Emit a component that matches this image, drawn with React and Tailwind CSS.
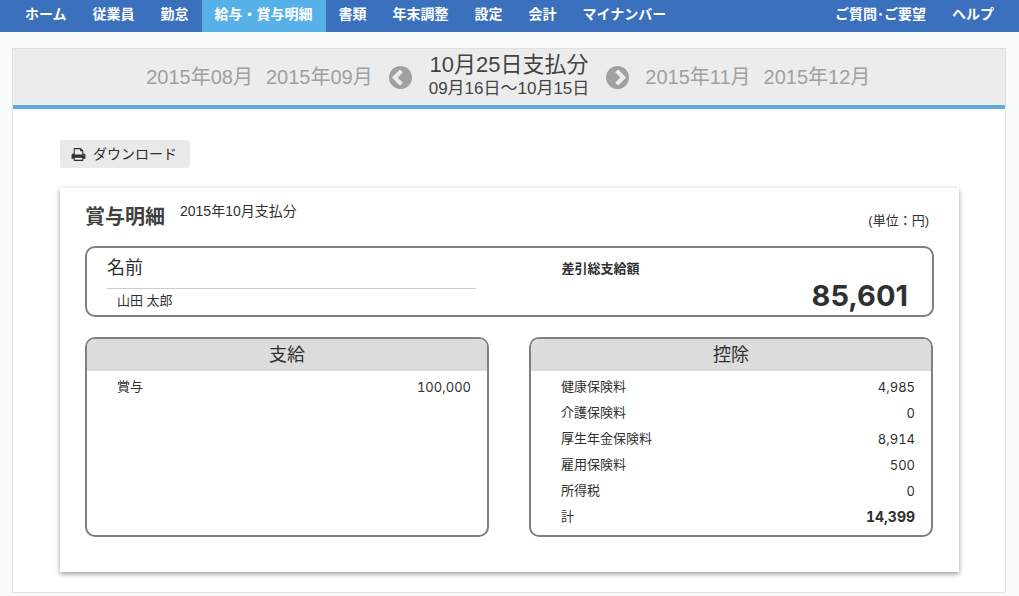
const NAV_ITEMS = ["ホーム", "従業員", "勤怠", "給与・賞与明細", "書類", "年末調整", "設定", "会計", "マイナンバー"];
const CURRENT_NAV = "給与・賞与明細";
const NAV_SUPPORT = ["ご質問･ご要望", "ヘルプ"];

const PAYMENTS = [{ label: "賞与", amount: "100,000" }];
const DEDUCTIONS = [
  { label: "健康保険料", amount: "4,985" },
  { label: "介護保険料", amount: "0" },
  { label: "厚生年金保険料", amount: "8,914" },
  { label: "雇用保険料", amount: "500" },
  { label: "所得税", amount: "0" },
  { label: "計", amount: "14,399", total: true },
];

function NavLink({ label, active }) {
  return (
    <li>
      <a
        href="#"
        aria-current={active ? "page" : undefined}
        className={`block px-[13px] pb-1 leading-7 whitespace-nowrap ${active ? "bg-[#58b0e8]" : ""}`}
      >
        {label}
      </a>
    </li>
  );
}

function ChevronCircle({ flipped }) {
  return (
    <svg
      viewBox="128 128 1536 1536"
      className={`size-[23px] ${flipped ? "-scale-x-100" : ""}`}
      fill="currentColor"
      aria-hidden="true"
    >
      <path d="M909 1395l102-102q19-19 19-45t-19-45l-307-307 307-307q19-19 19-45t-19-45l-102-102q-19-19-45-19t-45 19l-454 454q-19 19-19 45t19 45l454 454q19 19 45 19t45-19zm755-499q0 209-103 385.5t-279.5 279.5-385.5 103-385.5-103-279.5-279.5-103-385.5 103-385.5 279.5-279.5 385.5-103 385.5 103 279.5 279.5 103 385.5z" />
    </svg>
  );
}

function PrintIcon() {
  return (
    <svg viewBox="0 0 1792 1792" className="size-[15px]" fill="currentColor" aria-hidden="true">
      <path d="M448 1536h896v-256h-896v256zm0-640h896v-384h-160q-40 0-68-28t-28-68v-160h-640v640zm1152 64q0-26-19-45t-45-19-45 19-19 45 19 45 45 19 45-19 19-45zm128 0v416q0 13-9.5 22.5t-22.5 9.5h-224v160q0 40-28 68t-68 28h-960q-40 0-68-28t-28-68v-160h-224q-13 0-22.5-9.5t-9.5-22.5v-416q0-79 56.5-135.5t135.5-56.5h64v-544q0-40 28-68t68-28h672q40 0 88 20t76 48l152 152q28 28 48 76t20 88v256h64q79 0 135.5 56.5t56.5 135.5z" />
    </svg>
  );
}

function MonthPicker() {
  return (
    <div className="flex items-center justify-center gap-4 border-b-4 border-[#5fabdc] bg-[#ececec] text-[#a0a0a0]">
      <div className="flex flex-1 justify-end gap-[13px] text-xl leading-7 whitespace-nowrap">
        <a href="#">2015年08月</a>
        <a href="#">2015年09月</a>
      </div>
      <button type="button" aria-label="前の月">
        <ChevronCircle />
      </button>
      <h1 className="flex flex-col items-center px-px pt-[3px] pb-[5px] whitespace-nowrap text-[#444]">
        <span className="text-[22px] leading-[26px]">10月25日支払分</span>
        <span className="text-[17px] leading-[22px]">09月16日〜10月15日</span>
      </h1>
      <button type="button" aria-label="次の月">
        <ChevronCircle flipped />
      </button>
      <div className="flex flex-1 gap-[13px] text-xl leading-7 whitespace-nowrap">
        <a href="#">2015年11月</a>
        <a href="#">2015年12月</a>
      </div>
    </div>
  );
}

function Breakdown({ title, rows }) {
  return (
    <section className="overflow-hidden rounded-[10px] border-2 border-[#808080] pb-[5px]">
      <table className="w-full border-collapse">
        <caption className="mb-[3px] bg-[#dcdcdc] text-lg leading-8">{title}</caption>
        <tbody>
          {rows.map((row) => (
            <tr key={row.label} className="leading-[26px]">
              <th scope="row" className="p-0 pl-[30px] text-left font-normal">
                {row.label}
              </th>
              <td
                className={`p-0 pr-4 text-right font-[Inter,sans-serif] leading-[26px] tabular-nums ${row.total ? "text-sm leading-[26px] font-bold" : ""}`}
              >
                {row.amount}
              </td>
            </tr>
          ))}
        </tbody>
      </table>
    </section>
  );
}

export default function App() {
  return (
    <div className="min-h-screen bg-[#f9fbfa] pb-[3px] font-['Liberation_Sans','Noto_Sans_CJK_JP',sans-serif] text-[13px] text-[#303030]">
      <nav className="flex justify-between bg-[#3a70bc] px-3 text-sm font-bold text-white">
        <ul className="flex">
          {NAV_ITEMS.map((label) => (
            <NavLink key={label} label={label} active={label === CURRENT_NAV} />
          ))}
        </ul>
        <ul className="flex">
          {NAV_SUPPORT.map((label) => (
            <NavLink key={label} label={label} />
          ))}
        </ul>
      </nav>

      <main className="mt-4 mr-[13px] ml-3 border border-[#e0e2e1] bg-white">
        <MonthPicker />
        <div className="pt-[31px] pr-[46px] pb-5 pl-[47px]">
          <button
            type="button"
            className="flex h-7 items-center gap-[7px] rounded-[3px] bg-[#e9e9e9] pr-[13px] pl-[11px] text-sm"
          >
            <PrintIcon />
            ダウンロード
          </button>

          <article className="mt-5 bg-white px-[25px] pt-2 pb-[35px] shadow-[0_2px_5px_rgba(0,0,0,0.4)]">
            <header className="flex items-start pb-2">
              <h2 className="text-xl leading-[42px] font-bold text-[#404040]">賞与明細</h2>
              <p className="ml-[15px] text-sm leading-[30px]">2015年10月支払分</p>
              <p className="mr-[5px] ml-auto pt-2.5 leading-[30px]">(単位：円)</p>
            </header>

            <dl className="grid grid-cols-2 gap-x-[40px] rounded-[10px] border-2 border-[#808080] pb-0.5">
              <div className="pr-3.5 pl-5">
                <dt className="border-b border-[#ccc] text-lg leading-10">名前</dt>
                <dd className="pl-2.5 leading-6">山田 太郎</dd>
              </div>
              <div className="pt-2 pr-6 pl-8">
                <dt className="leading-[26px] font-bold">差引総支給額</dt>
                <dd className="text-right font-[Inter,sans-serif] text-[29px] leading-7 font-bold">85,601</dd>
              </div>
            </dl>

            <div className="mt-5 mr-px grid grid-cols-2 gap-10">
              <Breakdown title="支給" rows={PAYMENTS} />
              <Breakdown title="控除" rows={DEDUCTIONS} />
            </div>
          </article>
        </div>
      </main>
    </div>
  );
}
